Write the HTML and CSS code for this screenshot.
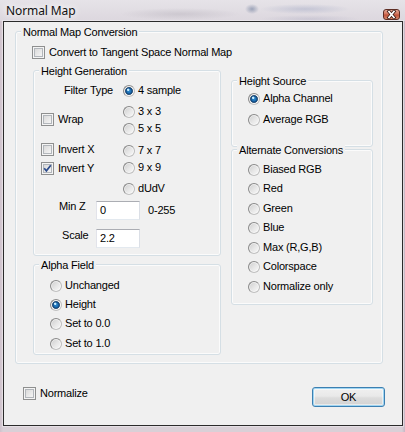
FILE: index.html
```html
<!DOCTYPE html>
<html>
<head>
<meta charset="utf-8">
<link rel="stylesheet" href="styles.css">
</head>
<body>
<div class="window">
  <div class="titlebar">
    <span class="title">Normal Map</span>
    <span class="close">
      <svg width="15" height="9" viewBox="0 0 15 9">
        <path d="M5 1.5 L10 7.5 M10 1.5 L5 7.5" stroke="#3a1a14" stroke-width="3.4" stroke-linecap="square"/>
        <path d="M5 1.5 L10 7.5 M10 1.5 L5 7.5" stroke="#ffffff" stroke-width="1.7" stroke-linecap="square"/>
      </svg>
    </span>
  </div>
  <div class="client">
    <div class="group main">
      <div class="legend">Normal Map Conversion</div>
      <div class="item row-convert"><span class="cb"></span><span>Convert to Tangent Space Normal Map</span></div>
      <div class="cols">
        <div class="col">
          <div class="group hg">
            <div class="legend">Height Generation</div>
            <div class="hg-top">
              <div class="hg-left">
                <div class="ftype">Filter Type</div>
                <div class="item wrap"><span class="cb"></span><span>Wrap</span></div>
                <div class="item invx"><span class="cb"></span><span>Invert X</span></div>
                <div class="item invy"><span class="cb"><svg width="11" height="11" viewBox="0 0 11 11"><path d="M2.2 5.2 L4.4 7.8 L8.8 2.2" fill="none" stroke="#2d4c8c" stroke-width="1.7"/></svg></span><span>Invert Y</span></div>
              </div>
              <div class="hg-right">
                <div class="item r r1"><span class="rb on"></span><span>4 sample</span></div>
                <div class="item r r2"><span class="rb"></span><span>3 x 3</span></div>
                <div class="item r r3"><span class="rb"></span><span>5 x 5</span></div>
                <div class="item r r4"><span class="rb"></span><span>7 x 7</span></div>
                <div class="item r r5"><span class="rb"></span><span>9 x 9</span></div>
                <div class="item r r6"><span class="rb"></span><span>dUdV</span></div>
              </div>
            </div>
            <div class="field-row minz">
              <span class="flabel">Min Z</span>
              <span class="tb">0</span>
              <span class="range">0-255</span>
            </div>
            <div class="field-row scale">
              <span class="flabel">Scale</span>
              <span class="tb">2.2</span>
            </div>
          </div>
          <div class="group af">
            <div class="legend">Alpha Field</div>
            <div class="list af-list">
              <div class="item r"><span class="rb"></span><span>Unchanged</span></div>
              <div class="item r"><span class="rb on"></span><span>Height</span></div>
              <div class="item r"><span class="rb"></span><span>Set to 0.0</span></div>
              <div class="item r"><span class="rb"></span><span>Set to 1.0</span></div>
            </div>
          </div>
        </div>
        <div class="col">
          <div class="group hs">
            <div class="legend">Height Source</div>
            <div class="list hs-list">
              <div class="item r"><span class="rb on"></span><span>Alpha Channel</span></div>
              <div class="item r"><span class="rb"></span><span>Average RGB</span></div>
            </div>
          </div>
          <div class="group ac">
            <div class="legend">Alternate Conversions</div>
            <div class="list ac-list">
              <div class="item r"><span class="rb"></span><span>Biased RGB</span></div>
              <div class="item r"><span class="rb"></span><span>Red</span></div>
              <div class="item r"><span class="rb"></span><span>Green</span></div>
              <div class="item r"><span class="rb"></span><span>Blue</span></div>
              <div class="item r"><span class="rb"></span><span>Max (R,G,B)</span></div>
              <div class="item r"><span class="rb"></span><span>Colorspace</span></div>
              <div class="item r"><span class="rb"></span><span>Normalize only</span></div>
            </div>
          </div>
        </div>
      </div>
    </div>
    <div class="footer">
      <div class="item norm"><span class="cb"></span><span>Normalize</span></div>
      <div class="ok">OK</div>
    </div>
  </div>
</div>
</body>
</html>
```

FILE: styles.css
```css
* { box-sizing: border-box; }
html, body { margin: 0; padding: 0; }
body {
  width: 405px;
  height: 432px;
  overflow: hidden;
  font-family: "Liberation Sans", Arial, sans-serif;
  font-size: 11px;
  letter-spacing: -0.2px;
  color: #000;
  background: linear-gradient(90deg, #cfc2cc 0px, #d9d0d7 3px, #d9d0d7 402px, #c9b6c4 405px);
}
.window {
  width: 405px;
  height: 432px;
  display: flex;
  flex-direction: column;
}
.titlebar {
  height: 21px;
  display: flex;
  align-items: flex-start;
  background:
    radial-gradient(ellipse 7px 5px at 252px 9px, rgba(70,90,130,0.45), transparent),
    radial-gradient(ellipse 45px 5px at 305px 9px, rgba(140,150,185,0.35), transparent),
    radial-gradient(ellipse 50px 4px at 310px 19px, rgba(150,150,180,0.25), transparent),
    radial-gradient(ellipse 60px 6px at 180px 14px, rgba(170,165,175,0.35), transparent),
    linear-gradient(180deg, #e6e3e8 0%, #dcd7de 100%);
}
.title {
  font-family: "Noto Sans", sans-serif;
  font-size: 12px;
  line-height: 15px;
  letter-spacing: -0.1px;
  margin: 3px 0 0 6px;
  color: #111;
  text-shadow: 0 0 6px #fff, 0 0 10px #fff;
}
.close {
  margin: 9px 5px 0 auto;
  width: 17px;
  height: 11px;
  border: 1px solid #5e2d24;
  border-radius: 3px;
  background: linear-gradient(180deg, #e8aa98 0%, #d2745c 45%, #c0513a 55%, #d98a6c 100%);
  display: flex;
  align-items: center;
  justify-content: center;
}
.close svg { display: block; }
.client {
  margin-left: 3px;
  width: 400px;
  height: 405px;
  border: 1px solid #2b2b2b;
  background: #f0f0f0;
  display: flex;
  flex-direction: column;
  box-shadow: 0 0 0 1px rgba(255,255,255,0.35);
}
.group {
  border: 1px solid #d5dfe5;
  border-radius: 3px;
  box-shadow: inset 0 0 0 1px #fbfbfb;
}
.legend {
  width: max-content;
  height: 13px;
  line-height: 13px;
  margin: -6px 0 0 5px;
  padding: 0 2px;
  background: #f0f0f0;
}
.main {
  margin: 9px 0 0 11px;
  width: 368px;
  height: 333px;
}
.item {
  display: flex;
  align-items: center;
  height: 13px;
  line-height: 13px;
  white-space: nowrap;
}
.cb {
  flex: none;
  width: 13px;
  height: 13px;
  margin-right: 4px;
  border: 1px solid #8e8f8f;
  background: linear-gradient(135deg, #d2d2d2 0%, #f6f6f6 85%);
  box-shadow: inset 0 0 0 1px #f4f4f4, inset 0 0 0 2px #b2b6bb;
  display: flex;
}
.cb svg { display: block; }
.rb {
  flex: none;
  width: 12px;
  height: 12px;
  margin-right: 3px;
  border-radius: 50%;
  border: 1px solid #9a9a9a;
  border-top-color: #8a8a8a;
  border-left-color: #8a8a8a;
  border-bottom-color: #c0c0c0;
  border-right-color: #bcbcbc;
  background: linear-gradient(135deg, #cdcdcd 0%, #e8e8e8 55%, #fafafa 100%);
  box-shadow: inset 0 0 0 1px rgba(255,255,255,0.55);
}
.rb.on {
  background:
    radial-gradient(circle at 42% 38%, #c6ecff 0, #c6ecff 0.8px, transparent 1.6px),
    radial-gradient(circle at 50% 50%, #2a8ad0 0, #1d6fb3 2px, #0d3f73 3.3px, #4f6a86 3.8px, transparent 4.3px),
    linear-gradient(135deg, #d0d0d0 0%, #eaeaea 55%, #fafafa 100%);
}
.row-convert { margin: 7px 0 0 16px; }
.cols {
  display: flex;
  gap: 10px;
  margin: 11px 0 0 17px;
}
.col {
  display: flex;
  flex-direction: column;
}
.hg { width: 188px; height: 186px; }
.hg-top {
  display: flex;
  margin-top: 6px;
}
.hg-left {
  width: 83px;
  padding-left: 7px;
  display: flex;
  flex-direction: column;
}
.ftype {
  height: 13px;
  line-height: 13px;
  text-align: right;
  padding-right: 4px;
}
.wrap { margin-top: 16px; }
.invx { margin-top: 17px; }
.invy { margin-top: 6px; }
.hg-right {
  margin-left: 6px;
  display: flex;
  flex-direction: column;
}
.r2 { margin-top: 8px; }
.r3 { margin-top: 4px; }
.r4 { margin-top: 9px; }
.r5 { margin-top: 4px; }
.r6 { margin-top: 8px; }
.field-row {
  display: flex;
  align-items: flex-start;
}
.minz { margin-top: 6px; }
.scale { margin-top: 9px; }
.flabel {
  line-height: 13px;
}
.minz .flabel { margin: -1px 0 0 25px; width: 37px; }
.scale .flabel { margin: 0 0 0 28px; width: 34px; }
.tb {
  width: 44px;
  height: 19px;
  border: 1px solid;
  border-color: #abadb3 #dbdfe6 #e3e9ef #e2e3ea;
  background: #fff;
  padding-left: 3px;
  line-height: 17px;
}
.range { margin: 3px 0 0 8px; line-height: 13px; }
.af { width: 188px; height: 91px; margin-top: 8px; }
.list {
  display: flex;
  flex-direction: column;
  margin-left: 16px;
}
.af-list { margin-top: 7px; gap: 6px; }
.af-list .item:last-child { margin-top: 1px; }
.hs { width: 142px; height: 67px; margin-top: 10px; }
.hs-list { margin-top: 4px; gap: 8px; }
.ac { width: 142px; height: 156px; margin-top: 2px; }
.ac-list { margin-top: 6px; }
.ac-list .item + .item { margin-top: 6px; }
.ac-list .item:nth-child(2n+3) { margin-top: 7px; }
.footer {
  display: flex;
  align-items: flex-start;
  margin-top: 23px;
}
.norm { margin-left: 19px; }
.ok {
  margin-left: auto;
  margin-right: 17px;
  width: 73px;
  height: 20px;
  border: 1px solid #3c7fb1;
  border-radius: 3px;
  background: linear-gradient(180deg, #f0f0f0 0%, #e9e9e9 45%, #dcdcdc 55%, #d2d2d2 100%);
  box-shadow: inset 0 0 0 1px #9fd5f2, inset 0 0 0 2px rgba(255,255,255,0.5);
  text-align: center;
  line-height: 18px;
}
```
